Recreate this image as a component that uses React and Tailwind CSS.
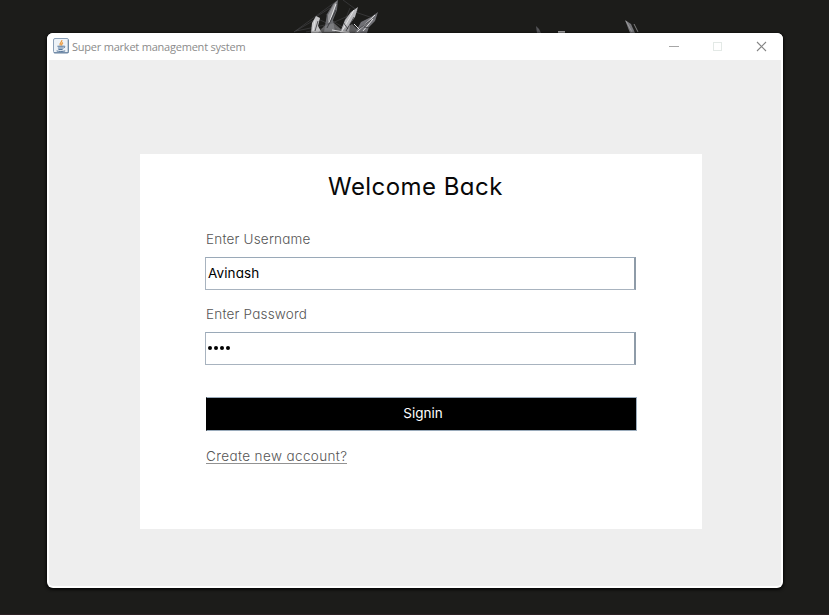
const FEATURES = "font-[Inter,sans-serif] [font-feature-settings:'cv11'] whitespace-nowrap";

function Wallpaper() {
  return (
    <svg className="absolute left-0 top-0" width="829" height="33" viewBox="0 0 829 33" fill="none">
      <g stroke="#55565a" strokeWidth="0.6" opacity="0.75">
        <path d="M294 32 338 0M294 32 316 19M296 31 330 24 357 12M338 0 328 18 352 33M343 0 358 11M316 17 330 8M355 12 376 19M318 19 346 32M326 14 340 32M350 8 340 33M306 32 326 28" />
      </g>
      <path d="M311 33 312 23 316 16 320 18 318 26 322 33Z" fill="#c4c4c6" />
      <path d="M324 32 327 14 333 4 338 0 337 10 333 20 335 32Z" fill="#68696d" />
      <path d="M328 15 334 4 337 1 333 14 328 23Z" fill="#99999c" />
      <path d="M340 33 345 20 351 12 358 7 355 17 350 24 349 33Z" fill="#b9b9bc" />
      <path d="M355 33 361 22 371 17 378 12 375 21 369 27 367 33Z" fill="#707075" />
      <path d="M318 33 324 26 334 23 342 30 352 24 361 33Z" fill="#88888c" opacity="0.6" />
      <g stroke="#e2e2e3" strokeWidth="1">
        <path d="M313 31 315 20M329 23 336 4M342 31 354 10M332 30 350 33M357 32 375 15M363 31 373 19M354 24 360 30" />
      </g>
      <g stroke="#26262a" strokeWidth="0.7">
        <path d="M327 28 336 10M346 31 354 17M359 29 371 20M315 31 318 21M348 29 343 22M364 27 370 28" />
      </g>
      <path d="M536 26 539 29 541 33 537 33Z" fill="#56565a" />
      <path d="M558 31h7v2h-7z" fill="#a5a5a6" />
      <path d="M625 20 631 24 635 33 630 33Z" fill="#77777b" />
      <path d="M626 21 632 32M634 24 638 32" stroke="#a9a9ab" strokeWidth="0.7" />
    </svg>
  );
}

function JavaIcon() {
  return (
    <svg className="block shrink-0" width="16" height="16" viewBox="0 0 16 16" fill="none">
      <rect x="0.5" y="0.5" width="15" height="14.5" rx="1.5" fill="#edf2f7" stroke="#8ba0b8" />
      <path d="M1 14.7h14.2V2" stroke="#65819f" />
      <path d="M8.8 2.2C9.3 4.4 6 4.6 7.3 7.4M10 4.6C8.4 5.6 8.7 6.2 8.6 7.6" stroke="#ec9a3c" strokeWidth="1.3" />
      <path d="M4.4 8.2h6.2M4.9 10h5.2M5.4 11.5h4.2" stroke="#55779d" strokeWidth="1.1" />
      <path d="M10.5 8.2c2-.4 1.8 1.5-.2 1.8M3.6 12.9c2 .7 6.4.7 8.6 0" stroke="#4b6d94" />
    </svg>
  );
}

function TitleBar() {
  return (
    <header className="flex h-[27px] shrink-0 items-center bg-white pl-[6px] pr-[15px]">
      <div className="-mt-[2px]"><JavaIcon /></div>
      <span className="ml-[3px] whitespace-nowrap font-['Open_Sans',sans-serif] text-[11px] leading-4 tracking-[-0.22px] text-[#8b8b8b]">
        Super market management system
      </span>
      <div className="ml-auto flex items-center">
        <svg className="block" width="100" height="12" viewBox="0 0 100 12" fill="none">
          <path d="M1 5.5h10" stroke="#a6a6a6" />
          <rect x="45.5" y="1.5" width="8" height="8" stroke="#e3e9e6" />
          <path d="m89 1 9 9M98 1l-9 9" stroke="#858585" strokeWidth="1.1" />
        </svg>
      </div>
    </header>
  );
}

function Field({ label, children }) {
  return (
    <div className="h-[75px]">
      <div className={`${FEATURES} h-[28px] text-[13.5px] font-light leading-[20px] tracking-[0.2px] text-[#555555]`}>{label}</div>
      <div className="-ml-px flex h-[33px] w-[431px] items-center border border-r-2 border-[#a8b3bf] border-r-[#8e9ba8] border-t-[#9aa9b8] bg-white pb-px pl-[2px]">
        {children}
      </div>
    </div>
  );
}

export default function App() {
  return (
    <div className="relative h-[615px] w-[829px] overflow-hidden border-b border-[#2a2023] bg-[#1c1c1a] pl-[47px] pt-[33px]">
      <Wallpaper />
      <div className="relative flex h-[555px] w-[736px] flex-col overflow-hidden rounded-[6px] bg-white shadow-[0_1px_3px_1px_#080808]">
        <TitleBar />
        <main className="mx-[2px] mb-[2px] flex-1 rounded-b-[4px] bg-[#eeeeee] pl-[91px] pt-[94px]">
          <section className="h-[375px] w-[562px] bg-white pl-[66px] pt-[17px]">
            <h1 className={`${FEATURES} ml-[122px] h-[58px] text-[24px] font-normal leading-[32px] tracking-[0.45px] text-[#080808]`}>
              Welcome Back
            </h1>
            <div>
              <Field label="Enter Username">
                <span className={`${FEATURES} text-[13.5px] leading-5 tracking-[0.1px] text-black`}>Avinash</span>
              </Field>
              <Field label="Enter Password">
                <div className="flex gap-[2px] pr-px">
                  {[0, 1, 2, 3].map((i) => (
                    <i key={i} className="size-[4px] rounded-full bg-black" />
                  ))}
                </div>
              </Field>
            </div>
            <div className="mt-[18px] flex h-[34px] w-[431px] justify-center border border-[#9aabbb] border-l-black bg-black pt-[5px]">
              <span className={`${FEATURES} pl-[3px] text-[13.5px] leading-5 text-white`}>Signin</span>
            </div>
            <div className="flex pt-[15px]">
              <a className={`${FEATURES} h-[18px] border-b border-[#929292] text-[13.5px] font-light leading-[20px] tracking-[0.38px] text-[#555555]`}>
                Create new account?
              </a>
            </div>
          </section>
        </main>
      </div>
    </div>
  );
}
